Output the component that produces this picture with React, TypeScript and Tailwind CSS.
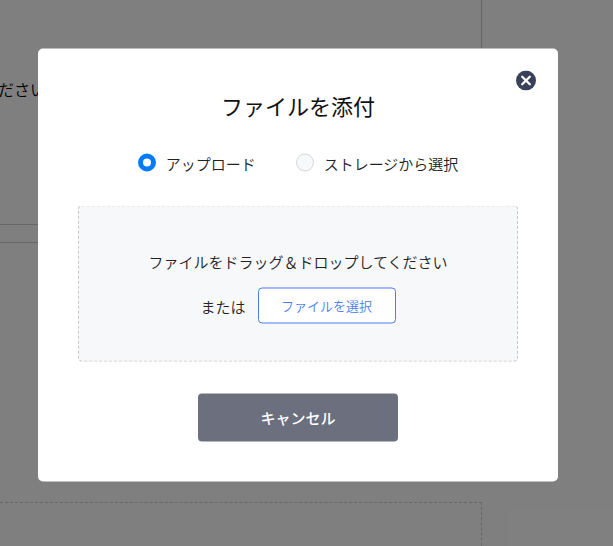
import React, { useState } from 'react';

interface RadioOptionProps {
  label: string;
  checked: boolean;
  onSelect: () => void;
}

function RadioOption({ label, checked, onSelect }: RadioOptionProps) {
  return (
    <label className="flex items-center cursor-pointer">
      <input type="radio" name="source" className="sr-only" checked={checked} onChange={onSelect} />
      <span
        className={
          checked
            ? 'w-[18px] h-[18px] rounded-full border-[5px] border-[#007bff] bg-white'
            : 'w-[18px] h-[18px] rounded-full border border-[#d5d6d8] bg-[#f6f8fa]'
        }
      />
      <span className="ml-2.5 text-[15px] leading-[22px] relative top-px">{label}</span>
    </label>
  );
}

function CloseIcon() {
  return (
    <svg width="20" height="20" viewBox="0 0 20 20" fill="none">
      <circle cx="10" cy="10" r="10" fill="#3a425b" />
      <path d="M6.2 6.2l7.6 7.6M13.8 6.2l-7.6 7.6" stroke="#fff" strokeWidth="2.3" strokeLinecap="round" />
    </svg>
  );
}

function PageBehind() {
  return (
    <div className="w-[482px] h-[546px] flex flex-col overflow-hidden">
      <div className="h-[225px] shrink-0 border-r border-b border-[#ccc] pt-[77px]">
        <p className="-ml-0.5 text-base leading-6 whitespace-nowrap text-black">ださい</p>
      </div>
      <div className="mt-[17px] h-[230px] shrink-0 border-t border-r border-[#ccc]" />
      <div className="mt-[30px] h-[120px] shrink-0 border border-l-0 border-dashed border-[#ccc]" />
    </div>
  );
}

export default function App() {
  const [source, setSource] = useState('upload');

  return (
    <div className="relative w-[613px] h-[546px] overflow-hidden bg-white text-[#222] font-[350] font-['Noto_Sans_CJK_JP',sans-serif]">
      <PageBehind />

      {/* Overlay */}
      <div className="absolute inset-0 bg-black/50 pl-[38px] pt-12">
        <div role="dialog" className="relative w-[520px] h-[433px] translate-y-[0.5px] rounded-[5px] bg-white px-10 flex flex-col items-center">
          <button type="button" aria-label="閉じる" className="absolute top-[22px] right-[22px] cursor-pointer">
            <CloseIcon />
          </button>

          <h2 className="mt-10 text-[22px] leading-8 font-normal text-[#111]">ファイルを添付</h2>

          <div className="mt-[31px] flex gap-10">
            <RadioOption label="アップロード" checked={source === 'upload'} onSelect={() => setSource('upload')} />
            <RadioOption label="ストレージから選択" checked={source === 'storage'} onSelect={() => setSource('storage')} />
          </div>

          {/* Drop area */}
          <div className="mt-8 w-[440px] h-[156px] shrink-0 rounded-[4px] border border-dashed border-[#c8c8c8] bg-[#f6f8fa] flex flex-col items-center pt-11 text-[15px] leading-[22px]">
            <p>ファイルをドラッグ＆ドロップしてください</p>
            <div className="mt-[15px] flex items-center">
              <span className="pt-0.5">または</span>
              <button type="button" className="ml-3 w-[138px] h-9 rounded-[4px] border border-[#4c7df0] bg-white text-[13px] text-[#4c7df0] cursor-pointer">
                ファイルを選択
              </button>
            </div>
          </div>

          <button type="button" className="mt-8 w-[200px] h-12 shrink-0 rounded-[4px] bg-[#6c6f7e] text-[15px] font-medium text-white cursor-pointer">
            キャンセル
          </button>
        </div>
      </div>
    </div>
  );
}
